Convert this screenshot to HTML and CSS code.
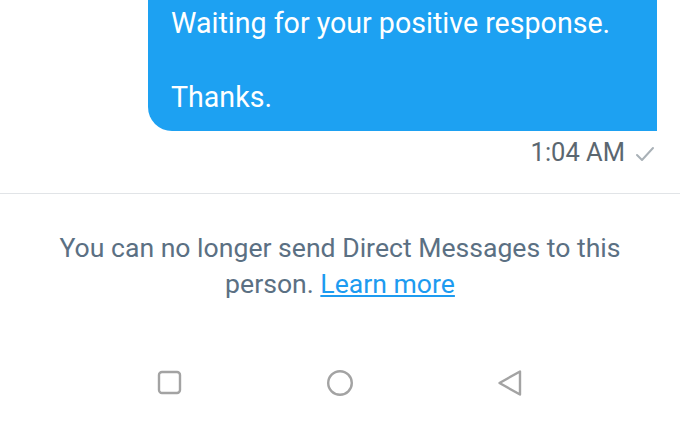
FILE: index.html
```html
<!DOCTYPE html>
<html>
<head>
<meta charset="utf-8">
<link rel="stylesheet" href="styles.css">
</head>
<body>
<div class="screen">
  <div class="thread">
    <div class="bubble">
      <p class="line">Waiting for your positive response.</p>
      <p class="line blank">&nbsp;</p>
      <p class="line">Thanks.</p>
    </div>
    <div class="meta">
      <span class="time">1:04 AM</span>
      <svg class="check" width="20" height="16" viewBox="0 0 20 16"><path d="M2 9 L7 14 L18 2" fill="none" stroke="#a9b1b7" stroke-width="2" stroke-linecap="round" stroke-linejoin="round"/></svg>
    </div>
  </div>
  <div class="notice">
    <p>You can no longer send Direct Messages to this person. <a href="#">Learn more</a></p>
  </div>
  <nav class="navbar">
    <svg class="nav-icon" width="26" height="26" viewBox="0 0 26 26"><rect x="2" y="2" width="21" height="21" rx="3" fill="none" stroke="#a3a3a3" stroke-width="2.4"/></svg>
    <svg class="nav-icon" width="28" height="28" viewBox="0 0 28 28"><circle cx="14" cy="14" r="11.8" fill="none" stroke="#a3a3a3" stroke-width="2.4"/></svg>
    <svg class="nav-icon" width="28" height="28" viewBox="0 0 28 28"><path d="M24 2.5 L24 25.5 L3.5 14 Z" fill="none" stroke="#a3a3a3" stroke-width="2.4" stroke-linejoin="round"/></svg>
  </nav>
</div>
</body>
</html>
```
FILE: styles.css
```css
* { box-sizing: border-box; }
html, body { margin: 0; padding: 0; background: #ffffff; }
body { font-family: Roboto, "Liberation Sans", sans-serif; width: 680px; height: 428px; overflow: hidden; }
.screen { display: flex; flex-direction: column; height: 428px; }
.thread { display: flex; flex-direction: column; align-items: flex-end; padding-right: 23px; border-bottom: 1.5px solid #e1e4e7; height: 194px; }
.bubble { width: 509px; background: #1da1f2; color: #ffffff; border-radius: 0 0 0 24px; padding: 5px 20px 15px 23px; }
.line { margin: 0; font-size: 28.6px; line-height: 37px; }
.meta { display: flex; align-items: center; gap: 10px; margin-top: 7px; }
.time { font-size: 25.5px; color: #5b6770; line-height: 28px; }
.check { margin-top: 4px; margin-right: 2px; }
.notice { padding: 36px 40px 0; text-align: center; }
.notice p { margin: 0; font-size: 26.6px; line-height: 36px; color: #5b7083; }
.notice a { color: #1d9bf0; text-decoration: underline; text-underline-offset: 2px; }
.navbar { display: flex; justify-content: space-between; align-items: center; padding: 0 156px 0 157px; margin-top: 67px; }
```
